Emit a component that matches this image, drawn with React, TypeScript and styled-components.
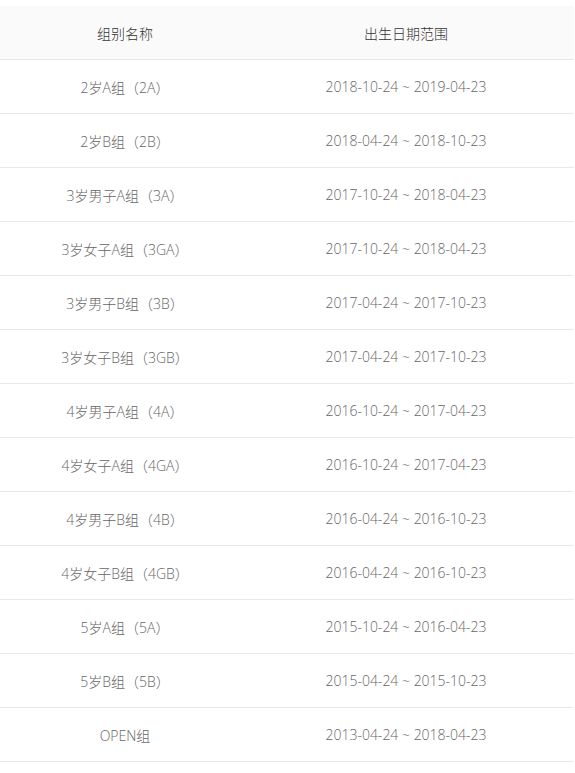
import React from "react";
import styled, { createGlobalStyle } from "styled-components";

const Global = createGlobalStyle`
  html, body { margin: 0; padding: 0; background: #fff; }
  body { font-family: "Open Sans", "Noto Sans CJK SC", sans-serif; }
`;

const Wrap = styled.div`
  padding-top: 6px;
  width: 574px;
`;

const Row = styled.div<{ $head?: boolean }>`
  display: grid;
  grid-template-columns: 250px 312px 12px;
  height: 53px;
  border-bottom: 1px solid #e8e8e8;
  background: ${(p) => (p.$head ? "#fafafa" : "#fff")};
  color: ${(p) => (p.$head ? "#333" : "#666")};
  font-size: 14px;
  font-weight: 300;
`;

const Cell = styled.div`
  display: flex;
  align-items: center;
  justify-content: center;
  white-space: nowrap;
`;

const rows: [string, string][] = [
  ["2岁A组（2A）", "2018-10-24 ~ 2019-04-23"],
  ["2岁B组（2B）", "2018-04-24 ~ 2018-10-23"],
  ["3岁男子A组（3A）", "2017-10-24 ~ 2018-04-23"],
  ["3岁女子A组（3GA）", "2017-10-24 ~ 2018-04-23"],
  ["3岁男子B组（3B）", "2017-04-24 ~ 2017-10-23"],
  ["3岁女子B组（3GB）", "2017-04-24 ~ 2017-10-23"],
  ["4岁男子A组（4A）", "2016-10-24 ~ 2017-04-23"],
  ["4岁女子A组（4GA）", "2016-10-24 ~ 2017-04-23"],
  ["4岁男子B组（4B）", "2016-04-24 ~ 2016-10-23"],
  ["4岁女子B组（4GB）", "2016-04-24 ~ 2016-10-23"],
  ["5岁A组（5A）", "2015-10-24 ~ 2016-04-23"],
  ["5岁B组（5B）", "2015-04-24 ~ 2015-10-23"],
  ["OPEN组", "2013-04-24 ~ 2018-04-23"],
];

export default function App() {
  return (
    <>
      <Global />
      <Wrap>
        <Row $head>
          <Cell>组别名称</Cell>
          <Cell>出生日期范围</Cell>
          <Cell />
        </Row>
        {rows.map(([a, b]) => (
          <Row key={a}>
            <Cell>{a}</Cell>
            <Cell>{b}</Cell>
            <Cell />
          </Row>
        ))}
      </Wrap>
    </>
  );
}
